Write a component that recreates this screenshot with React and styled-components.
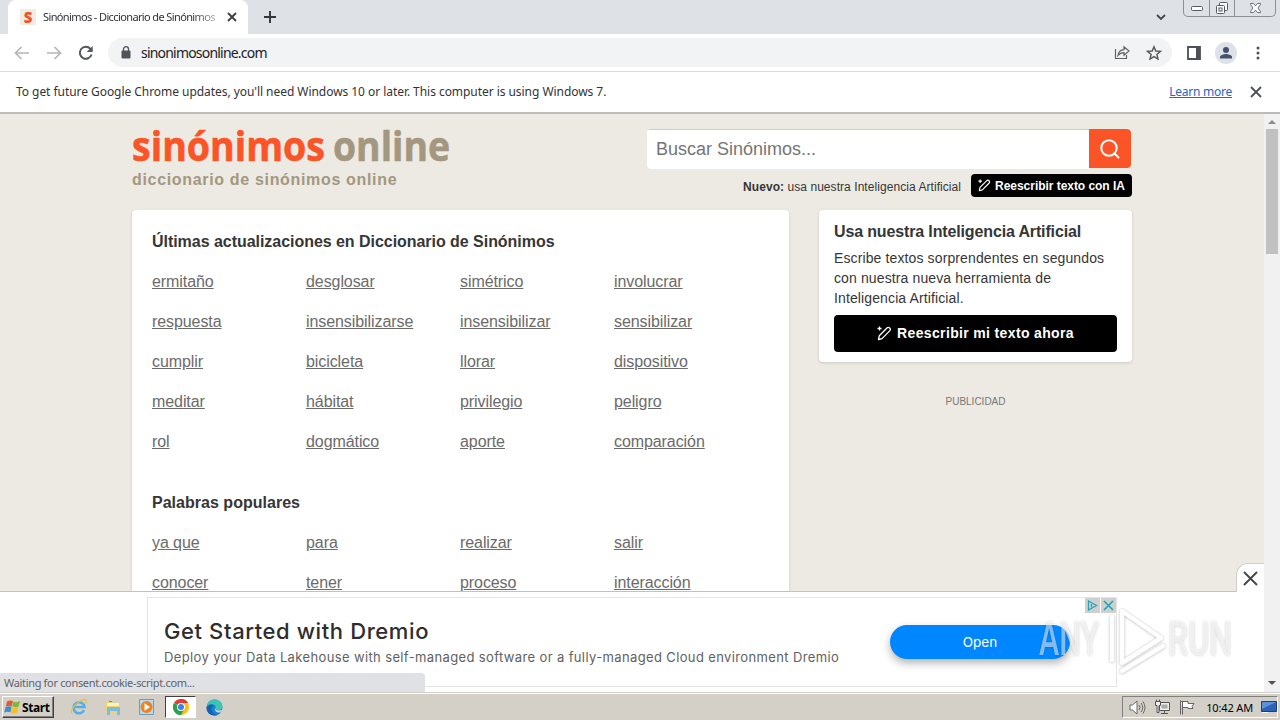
import styled, { createGlobalStyle } from "styled-components";

const updates = [
  "ermitaño", "desglosar", "simétrico", "involucrar",
  "respuesta", "insensibilizarse", "insensibilizar", "sensibilizar",
  "cumplir", "bicicleta", "llorar", "dispositivo",
  "meditar", "hábitat", "privilegio", "peligro",
  "rol", "dogmático", "aporte", "comparación",
];

const popular = [
  "ya que", "para", "realizar", "salir",
  "conocer", "tener", "proceso", "interacción",
];

export default function App() {
  return (
    <>
      <GlobalStyle />
      <StyledScreen>
        <TabStrip />
        <Toolbar />
        <StyledInfoBar>
          <StyledInfoText>
            To get future Google Chrome updates, you'll need Windows 10 or
            later. This computer is using Windows 7.
          </StyledInfoText>
          <StyledLearnMore href="#">Learn more</StyledLearnMore>
          <CrossIcon size={10} color="#4d5156" weight={1.8} />
        </StyledInfoBar>
        <StyledViewport>
          <StyledPage>
            <Header />
            <StyledColumns>
              <StyledMain>
                <StyledHeadline $spacing="-0.04px">
                  Últimas actualizaciones en Diccionario de Sinónimos
                </StyledHeadline>
                <WordList words={updates} />
                <StyledHeadline $spacing="0.02px">
                  Palabras populares
                </StyledHeadline>
                <WordList words={popular} />
              </StyledMain>
              <StyledSidebar>
                <StyledPromo>
                  <StyledPromoTitle>
                    Usa nuestra Inteligencia Artificial
                  </StyledPromoTitle>
                  <StyledPromoText>
                    Escribe textos sorprendentes en segundos
                    <br />
                    con nuestra nueva herramienta de
                    <br />
                    Inteligencia Artificial.
                  </StyledPromoText>
                  <StyledPromoButton type="button">
                    <PenIcon size={15} />
                    Reescribir mi texto ahora
                  </StyledPromoButton>
                </StyledPromo>
                <StyledAdLabel>PUBLICIDAD</StyledAdLabel>
              </StyledSidebar>
            </StyledColumns>
          </StyledPage>
          <Scrollbar />
          <BottomAd />
          <StyledStatus>Waiting for consent.cookie-script.com...</StyledStatus>
        </StyledViewport>
        <Taskbar />
        <Watermark />
      </StyledScreen>
    </>
  );
}

function TabStrip() {
  return (
    <StyledTabStrip>
      <StyledTab>
        <StyledFavicon>S</StyledFavicon>
        <StyledTabTitle>Sinónimos - Diccionario de Sinónimos</StyledTabTitle>
        <CrossIcon size={8} color="#3c4043" weight={1.8} />
      </StyledTab>
      <StyledNewTab width="12" height="12" viewBox="0 0 12 12">
        <path d="M6 0v12M0 6h12" stroke="#35363a" strokeWidth="1.9" />
      </StyledNewTab>
      <StyledTabSearch width="10" height="7" viewBox="0 0 10 7">
        <path d="M1 1l4 4 4-4" fill="none" stroke="#45484d" strokeWidth="1.8" />
      </StyledTabSearch>
      <StyledWindowButtons>
        <StyledWindowButton $width="25px">
          <svg width="14" height="7" viewBox="0 0 14 7">
            <rect x="1.5" y="1.5" width="11" height="4" rx="1" fill="#fff" stroke="#555b66" />
          </svg>
        </StyledWindowButton>
        <StyledWindowButton $width="25px">
          <svg width="14" height="13" viewBox="0 0 14 13">
            <g fill="#fff" stroke="#555b66">
              <rect x="4.5" y=".5" width="8" height="8" rx="1" />
              <rect x="1.5" y="3.5" width="8" height="8" rx="1" />
              <rect x="4" y="6" width="3" height="3" />
            </g>
          </svg>
        </StyledWindowButton>
        <StyledWindowButton $width="41px">
          <svg width="13" height="12" viewBox="0 0 13 12">
            <path
              d="M1.5 1.5h3l2 2.3 2-2.3h3v1L9 6l2.5 3.5v1h-3l-2-2.3-2 2.3h-3v-1L4 6 1.5 2.5z"
              fill="#fff"
              stroke="#666c77"
            />
          </svg>
        </StyledWindowButton>
      </StyledWindowButtons>
    </StyledTabStrip>
  );
}

function Toolbar() {
  return (
    <StyledToolbar>
      <svg width="16" height="14" viewBox="0 0 16 14">
        <path d="M15 7H2M7.5 1l-6 6 6 6" fill="none" stroke="#b4b6b9" strokeWidth="1.7" />
      </svg>
      <svg width="16" height="14" viewBox="0 0 16 14">
        <path d="M1 7h13M8.5 1l6 6-6 6" fill="none" stroke="#b4b6b9" strokeWidth="1.7" />
      </svg>
      <svg width="16" height="16" viewBox="0 0 16 16">
        <path d="M13.6 9.5A6 6 0 1 1 12.4 3.8L14 5.4" fill="none" stroke="#54575b" strokeWidth="2" />
        <path d="M14.7 1v6h-6z" fill="#54575b" />
      </svg>
      <StyledOmnibox>
        <svg width="10" height="13" viewBox="0 0 10 13">
          <rect x=".5" y="4.5" width="9" height="8" rx="1" fill="#505357" />
          <path d="M2.5 5V3.2a2.5 2.5 0 0 1 5 0V5" fill="none" stroke="#505357" strokeWidth="1.3" />
        </svg>
        <StyledUrl>sinonimosonline.com</StyledUrl>
        <svg width="16" height="15" viewBox="0 0 16 15">
          <g fill="none" stroke="#5f6368" strokeWidth="1.2">
            <path d="M1.5 4v9.5h11V10" />
            <path d="M4 10.5C4.500 6.500 7 4.700 10 4.600V1.800L15 6l-5 4.200V7.600C7.500 7.600 5.500 8.500 4 10.500z" />
          </g>
        </svg>
        <svg width="16" height="16" viewBox="0 0 16 16">
          <path
            d="M8 1.700l1.800 4.300 4.700.4-3.600 3.100 1.100 4.600L8 11.600l-4 2.500 1.100-4.600L1.500 6.400 6.200 6z"
            fill="none"
            stroke="#54575b"
            strokeWidth="1.4"
          />
        </svg>
      </StyledOmnibox>
      <svg width="14" height="14" viewBox="0 0 14 14">
        <path d="M1 1h12v12H1z" fill="none" stroke="#4d5054" strokeWidth="1.8" />
        <path d="M9 1h4v12H9z" fill="#4d5054" />
      </svg>
      <StyledAvatar>
        <svg width="14" height="14" viewBox="0 0 14 14" fill="#475069">
          <circle cx="7" cy="4" r="3" />
          <path d="M1 12.500V11c0-2 4-3 6-3s6 1 6 3v1.500z" />
        </svg>
      </StyledAvatar>
      <svg width="4" height="14" viewBox="0 0 4 14" fill="#4d5054">
        <circle cx="2" cy="2" r="1.5" />
        <circle cx="2" cy="7" r="1.5" />
        <circle cx="2" cy="12" r="1.5" />
      </svg>
    </StyledToolbar>
  );
}

function Header() {
  return (
    <StyledHeader>
      <div>
        <StyledLogo width="320" height="42" viewBox="0 0 320 42">
          <text x="0" y="38" textLength="193" lengthAdjust="spacingAndGlyphs" fill="#fb5527" stroke="#fb5527">
            sinónimos
          </text>
          <text x="201" y="38" textLength="117" lengthAdjust="spacingAndGlyphs" fill="#a39780" stroke="#a39780">
            online
          </text>
        </StyledLogo>
        <StyledTagline>diccionario de sinónimos online</StyledTagline>
      </div>
      <div>
        <StyledSearch>
          <StyledInput placeholder="Buscar Sinónimos..." />
          <StyledSearchButton type="button" aria-label="Buscar">
            <svg width="22" height="22" viewBox="0 0 22 22" fill="none" stroke="#fff" strokeWidth="2">
              <circle cx="10" cy="10" r="7.7" />
              <path d="M15.5 15.5l4 4" strokeLinecap="round" />
            </svg>
          </StyledSearchButton>
        </StyledSearch>
        <StyledNews>
          <StyledNewsText>
            <b>Nuevo:</b> usa nuestra Inteligencia Artificial
          </StyledNewsText>
          <StyledRewrite type="button">
            <PenIcon size={13} />
            Reescribir texto con IA
          </StyledRewrite>
        </StyledNews>
      </div>
    </StyledHeader>
  );
}

function WordList({ words }) {
  return (
    <StyledWords>
      {words.map((word) => (
        <li key={word}>
          <StyledWord href="#">{word}</StyledWord>
        </li>
      ))}
    </StyledWords>
  );
}

function Scrollbar() {
  return (
    <StyledScrollbar>
      <svg width="8" height="5" viewBox="0 0 8 5">
        <path d="M0 5l4-4 4 4z" fill="#8a8a8a" />
      </svg>
      <StyledThumb />
      <svg width="8" height="5" viewBox="0 0 8 5">
        <path d="M0 0h8L4 4z" fill="#505050" />
      </svg>
    </StyledScrollbar>
  );
}

function BottomAd() {
  return (
    <StyledBottomAd>
      <StyledAdClose type="button">
        <CrossIcon size={13} color="#444" weight={1.8} />
      </StyledAdClose>
      <StyledAdFrame>
        <StyledAdCopy>
          <StyledAdTitle>Get Started with Dremio</StyledAdTitle>
          <StyledAdText>
            Deploy your Data Lakehouse with self-managed software or a
            fully-managed Cloud environment Dremio
          </StyledAdText>
        </StyledAdCopy>
        <StyledOpen type="button">Open</StyledOpen>
        <StyledAdChoices>
          <StyledAdChip>
            <svg width="11" height="11" viewBox="0 0 11 11">
              <path d="M1.5 1l8 4.500-8 4.500z" fill="none" stroke="#20a5b5" strokeWidth="1.2" />
              <path d="M4.500 4v3.500" stroke="#20a5b5" strokeWidth="1.2" />
            </svg>
          </StyledAdChip>
          <StyledAdChip>
            <CrossIcon size={9} color="#20a5b5" weight={1.6} />
          </StyledAdChip>
        </StyledAdChoices>
      </StyledAdFrame>
    </StyledBottomAd>
  );
}

function Taskbar() {
  return (
    <StyledTaskbar>
      <StyledStart>
        <svg width="17" height="16" viewBox="-1 0 17 16">
          <path d="M2 2.500Q5 .8 8 2.200L6.800 7.300Q4 6 .8 7.500z" fill="#e8592b" />
          <path d="M8.500 2.500q3 1.500 6.500-.5l-1.300 5.500q-3 1.500-6.300 0z" fill="#7cb83e" />
          <path d="M.6 8q3-1.500 6-.2l-1.200 5.500Q2.500 12-.8 13.500z" fill="#3f8fd0" />
          <path d="M7.200 8.200q3 1.500 6.300 0l-1.400 5.600q-3 1.500-6.200 0z" fill="#f7bf27" />
        </svg>
        Start
      </StyledStart>
      <StyledLaunchers>
        <StyledLauncher>
          <svg width="18" height="18" viewBox="0 0 18 18" fill="none">
            <path d="M14 12.200A5.500 5.500 0 1 1 14.500 9H5" stroke="#55aee0" strokeWidth="2.6" />
            <path d="M2 15.500C-1 13 7 3 14 1.700c3-.4 2.800 2 1.500 4" stroke="#e6c04b" strokeWidth="1.3" />
          </svg>
        </StyledLauncher>
        <StyledLauncher>
          <svg width="18" height="18" viewBox="0 0 18 18">
            <path d="M2 3h6l1 2h7v10H2z" fill="#edd27a" />
            <path d="M3 5h12v3H3z" fill="#fff2b8" />
            <path d="M3 9h13v8h-3v-4H6v4H3z" fill="#79bedf" />
            <path d="M5 3.500h3" stroke="#50a55c" />
          </svg>
        </StyledLauncher>
        <StyledLauncher>
          <svg width="18" height="18" viewBox="0 0 18 18">
            <path d="M1.500 1.500h14v15h-14z" fill="#b9d9ee" stroke="#6c9cc4" />
            <circle cx="8.5" cy="9" r="6" fill="#ee8322" />
            <path d="M6.500 5.300l5.500 3.700-5.500 3.700z" fill="#fff" />
          </svg>
        </StyledLauncher>
        <StyledLauncher $active>
          <svg width="16" height="16" viewBox="0 0 16 16">
            <path d="M8 8L1.070 4A8 8 0 0 1 14.930 4z" fill="#e33b2e" />
            <path d="M8 8l6.930-4A8 8 0 0 1 8 16z" fill="#fbc116" />
            <path d="M8 8v8A8 8 0 0 1 1.070 4z" fill="#2da24c" />
            <path d="M8 4h6.930l-3.500 6z" fill="#fbc116" />
            <path d="M8 4h6.930A8 8 0 0 0 8 0z" fill="#e33b2e" />
            <path d="M4.500 10L1.070 4A8 8 0 0 0 8 16l3.500-6z" fill="#2da24c" />
            <circle cx="8" cy="8" r="4" fill="#fff" />
            <circle cx="8" cy="8" r="3" fill="#3d7fe8" />
          </svg>
        </StyledLauncher>
        <StyledLauncher>
          <svg width="17" height="17" viewBox="0 0 17 17">
            <circle cx="8.5" cy="8.5" r="8" fill="#1b84d2" />
            <path d="M.8 7C2 2 6 .3 9.500.5c4.500.3 7 3.700 7 6.800 0 2.700-2 4.200-4.500 4.200-2 0-3-1-2.300-2C11 6.500 6 3 .8 7z" fill="#3fc4b4" />
            <path d="M.6 8.500C2.500 4.500 6.500 5 8 6.500c-3 1-3.500 5 0 8 1 .9 2.300 1.300 3.500 1.400C6 18 0 14 .6 8.500z" fill="#1562b0" />
            <path d="M9.500 8.500c-1 2.500 2 4 7.500 2.200L15 13.200C12 14.500 7 12 9.500 8.500z" fill="#d4d0c8" />
          </svg>
        </StyledLauncher>
      </StyledLaunchers>
      <StyledTray>
        <svg width="17" height="15" viewBox="0 0 17 15" fill="none" stroke="#666">
          <path d="M1 5h2.500L8 1v13L3.500 10H1z" fill="#fff" />
          <path d="M10 5q2 2.500 0 5M12 3q3.500 4.500 0 9M14 1.500q4 6 0 12" />
        </svg>
        <svg width="17" height="16" viewBox="0 0 17 16" fill="#eee" stroke="#555">
          <path d="M5.500 3.500h10v8h-10zM7 14.500h7M10.500 12v2" />
          <path d="M7.500 5.500h6v4h-6z" fill="#aaa" stroke="none" />
          <path d="M1.500 2.500h5v4h-1.500v7H3v-7H1.500zM2.500.5v2M5.500.5v2" />
        </svg>
        <svg width="17" height="15" viewBox="0 0 17 15" fill="#fff" stroke="#666">
          <path d="M2 1.500h7v2h6l-2 3 1 2H9v-1H3.500M1.500.5v14M3.500 2v12.500" />
        </svg>
        <StyledClock>10:42 AM</StyledClock>
        <svg width="16" height="14" viewBox="0 0 16 14">
          <path d="M.5 1.500h15v10H.5z" fill="#2c62b8" stroke="#1c3e78" />
          <path d="M1 2h14L1 9z" fill="#5b92dc" />
          <path d="M1 12.500h6" stroke="#fff" />
        </svg>
      </StyledTray>
    </StyledTaskbar>
  );
}

function Watermark() {
  return (
    <StyledWatermark width="206" height="72" viewBox="0 0 206 72">
      <g fill="#fff" fillOpacity=".6">
        <text x="4" y="52" textLength="60" lengthAdjust="spacingAndGlyphs">
          ANY
        </text>
        <text x="133" y="52" textLength="64" lengthAdjust="spacingAndGlyphs">
          RUN
        </text>
      </g>
      <g fill="none" stroke="#fff" strokeWidth="4.5" strokeLinejoin="round" strokeLinecap="round">
        <path d="M87 8l39 27-39 25z" />
        <path d="M77 14v43M87 68l41-25" />
      </g>
    </StyledWatermark>
  );
}

function CrossIcon({ size, color, weight }) {
  return (
    <svg width={size + 2} height={size + 2} viewBox={`-1 -1 ${size + 2} ${size + 2}`}>
      <path d={`M0 0l${size} ${size}M${size} 0L0 ${size}`} stroke={color} strokeWidth={weight} />
    </svg>
  );
}

function PenIcon({ size }) {
  return (
    <svg width={size} height={size} viewBox="0 0 15 15" fill="none" stroke="#fff" strokeWidth="1.3">
      <path d="M1.500 13.500l.8-3.800 7.900-7.900q1.200-1 2.500.2t.2 2.600L5 12.600z" strokeLinejoin="round" />
      <path d="M2.500.5v4M.5 2.500h4" />
    </svg>
  );
}

const GlobalStyle = createGlobalStyle`
  * {
    box-sizing: border-box;
  }
  body {
    margin: 0;
    overflow: hidden;
    font-family: "Liberation Sans", Arial, sans-serif;
    color: #363636;
  }
  svg {
    display: block;
    flex-shrink: 0;
  }
  button {
    border: none;
    padding: 0;
    font-family: inherit;
  }
`;

const systemFont = `"Noto Sans", "Open Sans", sans-serif`;

const StyledScreen = styled.div`
  display: flex;
  flex-direction: column;
  width: 1280px;
  height: 720px;
  position: relative;
  overflow: hidden;
  background: #fff;
`;

const StyledTabStrip = styled.header`
  display: flex;
  align-items: flex-start;
  height: 34px;
  background: #dee1e6;
`;

const StyledTab = styled.div`
  display: flex;
  align-items: center;
  width: 240px;
  height: 34px;
  margin-left: 8px;
  padding: 0 11px 0 12px;
  border-radius: 8px 8px 0 0;
  background: #fff;
`;

const StyledFavicon = styled.span`
  width: 16px;
  height: 16px;
  margin-right: 7px;
  background: #f1ece4;
  color: #f5502a;
  font: 900 15px/16px ${systemFont};
  text-align: center;
`;

const StyledTabTitle = styled.span`
  width: 174px;
  margin-right: 10px;
  overflow: hidden;
  white-space: nowrap;
  font: 11px/16px ${systemFont};
  letter-spacing: -0.62px;
  color: #303236;
  mask-image: linear-gradient(90deg, #000 86%, rgba(0, 0, 0, 0.3) 100%);
`;

const StyledNewTab = styled.svg`
  margin: 11px 0 0 16px;
`;

const StyledTabSearch = styled.svg`
  margin: 14px 17px 0 auto;
`;

const StyledWindowButtons = styled.div`
  display: flex;
  margin-right: 4px;
  height: 17px;
  border: 1px solid #8a8f98;
  border-top: none;
  border-radius: 0 0 5px 5px;
  overflow: hidden;
`;

const StyledWindowButton = styled.div`
  display: flex;
  align-items: center;
  justify-content: center;
  width: ${(props) => props.$width};
  & + & {
    border-left: 1px solid #8a8f98;
  }
`;

const StyledToolbar = styled.div`
  display: flex;
  align-items: center;
  height: 38px;
  padding: 0 20px 0 14px;
  gap: 16px;
  border-bottom: 1px solid #dadce0;
  background: #fff;
`;

const StyledOmnibox = styled.div`
  display: flex;
  align-items: center;
  flex: 1;
  height: 29px;
  gap: 16px;
  margin: 0 -1px 0 -2px;
  padding: 0 10px 0 13px;
  border-radius: 15px;
  background: #f1f3f4;
`;

const StyledUrl = styled.span`
  flex: 1;
  margin-left: -6px;
  font: 14px/20px ${systemFont};
  letter-spacing: -0.8px;
  color: #202124;
`;

const StyledAvatar = styled.div`
  display: flex;
  align-items: center;
  justify-content: center;
  width: 22px;
  height: 22px;
  margin: 0 3px 0 -2px;
  border-radius: 50%;
  background: #dde1e8;
`;

const StyledInfoBar = styled.div`
  display: flex;
  align-items: center;
  height: 42px;
  padding: 0 18px 0 16px;
  border-bottom: 2px solid #bdbab9;
  background: #fff;
  font: 12px/18px ${systemFont};
`;

const StyledInfoText = styled.span`
  flex: 1;
  letter-spacing: -0.05px;
  color: #333;
`;

const StyledLearnMore = styled.a`
  margin-right: 18px;
  letter-spacing: -0.25px;
  color: #2b63c4;
`;

const StyledViewport = styled.div`
  position: relative;
  display: flex;
  height: 578px;
`;

const StyledPage = styled.main`
  width: 1264px;
  height: 578px;
  padding: 0 132px;
  overflow: hidden;
  background: #edeae4;
`;

const StyledHeader = styled.div`
  display: flex;
  justify-content: space-between;
  height: 96px;
`;

const StyledLogo = styled.svg`
  margin-top: 9px;
  overflow: visible;
  text {
    font: 700 42px "Open Sans", sans-serif;
    stroke-width: 0.6px;
  }
`;

const StyledTagline = styled.p`
  margin: 5px 0 0;
  font-size: 16px;
  font-weight: 700;
  line-height: 20px;
  letter-spacing: 0.67px;
  color: #a39780;
`;

const StyledSearch = styled.div`
  display: flex;
  width: 484px;
  height: 40px;
  margin: 15px 1px 0 0;
  border-radius: 4px;
  overflow: hidden;
`;

const StyledInput = styled.input`
  flex: 1;
  min-width: 0;
  padding: 0 9px;
  border: none;
  border-top: 1px solid #ccc;
  background: #fff;
  font: 18px "Liberation Sans", Arial, sans-serif;
  &::placeholder {
    color: #757575;
    opacity: 1;
  }
`;

const StyledSearchButton = styled.button`
  display: flex;
  align-items: center;
  justify-content: center;
  width: 42px;
  height: 39px;
  border-radius: 0 4px 4px 0;
  background: #fb5527;
`;

const StyledNews = styled.div`
  display: flex;
  justify-content: flex-end;
  align-items: center;
  gap: 10px;
  margin-top: 5px;
`;

const StyledNewsText = styled.span`
  margin-top: 2px;
  font-size: 12px;
  letter-spacing: 0.06px;
`;

const StyledRewrite = styled.button`
  display: flex;
  align-items: center;
  justify-content: center;
  gap: 4px;
  width: 161px;
  height: 23px;
  border-radius: 4px;
  background: #000;
  color: #fff;
  font-size: 12px;
  font-weight: 700;
  letter-spacing: -0.04px;
  white-space: nowrap;
`;

const StyledColumns = styled.div`
  display: flex;
  align-items: flex-start;
  gap: 30px;
`;

const StyledMain = styled.section`
  width: 657px;
  height: 500px;
  padding: 22px 20px 0;
  border-radius: 4px;
  background: #fff;
  box-shadow: 0 1px 3px rgba(0, 0, 0, 0.15);
`;

const StyledHeadline = styled.h2`
  margin: 0;
  font-size: 16px;
  line-height: 20px;
  letter-spacing: ${(props) => props.$spacing};
`;

const StyledWords = styled.ul`
  display: grid;
  grid-template-columns: repeat(4, 154px);
  grid-auto-rows: 40px;
  margin: 10px 0 31px;
  padding: 0;
  list-style: none;
`;

const StyledWord = styled.a`
  font-size: 16px;
  line-height: 40px;
  letter-spacing: -0.08px;
  color: #6b6b6b;
  text-underline-offset: 1px;
`;

const StyledSidebar = styled.aside`
  width: 313px;
`;

const StyledPromo = styled.div`
  height: 152px;
  padding: 12px 15px 0;
  border-radius: 4px;
  background: #fff;
  box-shadow: 0 1px 3px rgba(0, 0, 0, 0.15);
`;

const StyledPromoTitle = styled.h3`
  margin: 0;
  font-size: 16px;
  line-height: 20px;
  letter-spacing: -0.14px;
`;

const StyledPromoText = styled.p`
  margin: 6px 0 7px;
  font-size: 14px;
  line-height: 20px;
  letter-spacing: 0.12px;
  white-space: nowrap;
`;

const StyledPromoButton = styled.button`
  display: flex;
  align-items: center;
  justify-content: center;
  gap: 5px;
  width: 283px;
  height: 37px;
  padding-bottom: 1px;
  border-radius: 4px;
  background: #000;
  color: #fff;
  font-size: 14px;
  font-weight: 700;
  letter-spacing: 0.35px;
`;

const StyledAdLabel = styled.p`
  margin: 34px 0 0;
  font-size: 10px;
  line-height: 12px;
  text-align: center;
  color: #777;
`;

const StyledScrollbar = styled.div`
  display: flex;
  flex-direction: column;
  align-items: center;
  justify-content: space-between;
  width: 16px;
  padding: 5px 0 6px;
  background: #f1f1f1;
`;

const StyledThumb = styled.div`
  width: 12px;
  height: 125px;
  margin: 5px 0 auto;
  background: #c1c1c1;
`;

const StyledBottomAd = styled.div`
  position: absolute;
  left: 0;
  bottom: 0;
  width: 1264px;
  height: 101px;
  padding: 5px 147px 0;
  border-top: 1px solid #c3c1bc;
  background: #fff;
`;

const StyledAdClose = styled.button`
  position: absolute;
  top: -29px;
  right: 0;
  display: flex;
  align-items: center;
  justify-content: center;
  width: 28px;
  height: 29px;
  border: 1px solid #d0cec9;
  border-width: 1px 0 0 1px;
  border-radius: 12px 0 0 0;
  background: #fff;
`;

const StyledAdFrame = styled.div`
  position: relative;
  display: flex;
  justify-content: space-between;
  height: 90px;
  border: 1px solid #e4e4e4;
  padding: 0 46px 0 16px;
`;

const StyledAdCopy = styled.div`
  padding-top: 19px;
  white-space: nowrap;
`;

const StyledAdTitle = styled.h2`
  margin: 0;
  font: 500 22px/28px Inter, sans-serif;
  letter-spacing: 0.6px;
  color: #2d2d2d;
`;

const StyledAdText = styled.p`
  margin: 3px 0 0;
  font: 13px/18px Inter, sans-serif;
  letter-spacing: 0.37px;
  color: #616161;
`;

const StyledOpen = styled.button`
  width: 180px;
  height: 34px;
  margin-top: 27px;
  padding-bottom: 1px;
  border-radius: 17px;
  background: #0087ff;
  box-shadow: 0 4px 8px rgba(0, 0, 0, 0.3);
  color: #fff;
  font: 13.500px Inter, sans-serif;
`;

const StyledAdChoices = styled.div`
  position: absolute;
  top: 0;
  right: 0;
  display: flex;
  gap: 1px;
`;

const StyledAdChip = styled.div`
  display: flex;
  align-items: center;
  justify-content: center;
  width: 15px;
  height: 15px;
  background: #cfcfcf;
`;

const StyledStatus = styled.div`
  position: absolute;
  left: 0;
  bottom: 0;
  width: 425px;
  height: 19px;
  padding: 0 0 0 4px;
  border-radius: 0 4px 0 0;
  background: #dfe1e5;
  font: 11px/19px ${systemFont};
  letter-spacing: -0.33px;
  color: #606368;
`;

const StyledTaskbar = styled.footer`
  display: flex;
  align-items: center;
  height: 28px;
  padding: 2px 2px 1px;
  border-top: 1px solid #d4d0c8;
  background: #d4d0c8;
  box-shadow: inset 0 1px #fff;
`;

const StyledStart = styled.div`
  display: flex;
  align-items: center;
  gap: 1px;
  width: 52px;
  height: 22px;
  padding-left: 1px;
  border: 1px solid;
  border-color: #fff #404040 #404040 #fff;
  box-shadow: inset -1px -1px #808080;
  font: 700 12px "Noto Sans", sans-serif;
  letter-spacing: -0.4px;
  color: #000;
`;

const StyledLaunchers = styled.div`
  display: flex;
  align-items: center;
  gap: 3px;
  margin-left: 9px;
`;

const StyledLauncher = styled.div`
  display: flex;
  align-items: center;
  justify-content: center;
  width: 31px;
  height: 22px;
  background: ${(props) => (props.$active ? "#fff" : "none")};
  border: 1px solid transparent;
  border-color: ${(props) =>
    props.$active ? "#404040 #fff #fff #404040" : "transparent"};
`;

const StyledTray = styled.div`
  display: flex;
  align-items: center;
  gap: 8px;
  width: 156px;
  height: 22px;
  margin-left: auto;
  padding-left: 6px;
  border: 1px solid;
  border-color: #808080 #fff #fff #808080;
`;

const StyledClock = styled.span`
  flex: 1;
  font: 11px ${systemFont};
  letter-spacing: -0.15px;
  color: #000;
  white-space: nowrap;
  text-align: right;
`;

const StyledWatermark = styled.svg`
  position: absolute;
  left: 1035px;
  top: 603px;
  overflow: visible;
  opacity: 0.85;
  filter: drop-shadow(0 0 1px rgba(0, 0, 0, 0.22))
    drop-shadow(0 1px 1.500px rgba(0, 0, 0, 0.15));
  pointer-events: none;
  text {
    font: 500 48px Roboto, sans-serif;
  }
`;
